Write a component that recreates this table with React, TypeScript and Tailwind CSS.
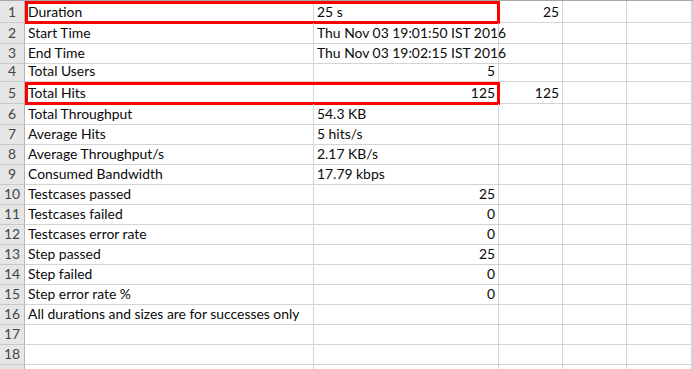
import React from "react";

type Row = { n: number; h: number; a?: string; b?: string; bRight?: boolean; c?: string; red?: boolean };

const rows: Row[] = [
  { n: 1, h: 22, a: "Duration", b: "25 s", c: "25", red: true },
  { n: 2, h: 21, a: "Start Time", b: "Thu Nov 03 19:01:50 IST 2016" },
  { n: 3, h: 20, a: "End Time", b: "Thu Nov 03 19:02:15 IST 2016" },
  { n: 4, h: 18, a: "Total Users", b: "5", bRight: true },
  { n: 5, h: 22, a: "Total Hits", b: "125", bRight: true, c: "125", red: true },
  { n: 6, h: 21, a: "Total Throughput", b: "54.3 KB" },
  { n: 7, h: 20, a: "Average Hits", b: "5 hits/s" },
  { n: 8, h: 20, a: "Average Throughput/s", b: "2.17 KB/s" },
  { n: 9, h: 20, a: "Consumed Bandwidth", b: "17.79 kbps" },
  { n: 10, h: 20, a: "Testcases passed", b: "25", bRight: true },
  { n: 11, h: 20, a: "Testcases failed", b: "0", bRight: true },
  { n: 12, h: 20, a: "Testcases error rate", b: "0", bRight: true },
  { n: 13, h: 20, a: "Step passed", b: "25", bRight: true },
  { n: 14, h: 20, a: "Step failed", b: "0", bRight: true },
  { n: 15, h: 20, a: "Step error rate %", b: "0", bRight: true },
  { n: 16, h: 20, a: "All durations and sizes are for successes only" },
  { n: 17, h: 20 },
  { n: 18, h: 20 },
  { n: 19, h: 20 },
];

const cell = "border-r border-b border-[#d4d4d4] flex items-end pb-[2px] whitespace-nowrap overflow-visible";

export default function App() {
  return (
    <div
      className="w-[693px] h-[369px] overflow-hidden bg-white text-[13.9px] leading-[16px] text-[#0a0a0a]"
      style={{ fontFamily: "Lato, 'Liberation Sans', sans-serif" }}
    >
      <div className="h-px bg-[#a6a6a6]" />
      {rows.map((r) => (
        <div key={r.n} className="relative flex" style={{ height: r.h }}>
          <div className="w-[25px] shrink-0 bg-[#e6e6e6] border-r border-r-[#b5b5b5] border-b border-b-[#c8c8c8] flex items-end justify-center pb-[2px] text-[#444]">
            {r.n < 19 ? r.n : ""}
          </div>
          <div className={`w-[289px] shrink-0 pl-[3px] ${cell}`}>{r.a}</div>
          <div className={`w-[185px] shrink-0 px-[3px] ${cell} ${r.bRight ? "justify-end" : ""}`}>{r.b}</div>
          <div className={`w-[64px] shrink-0 px-[3px] justify-end ${cell}`}>{r.c}</div>
          <div className={`w-[64px] shrink-0 ${cell}`} />
          <div className={`w-[65px] shrink-0 ${cell}`} />
          <div className={`flex-1 ${cell}`} />
          {r.red && (
            <div className="absolute left-[25px] w-[475px] top-0 bottom-[-1px] border-[3px] border-[#ff0000] pointer-events-none" />
          )}
        </div>
      ))}
    </div>
  );
}
